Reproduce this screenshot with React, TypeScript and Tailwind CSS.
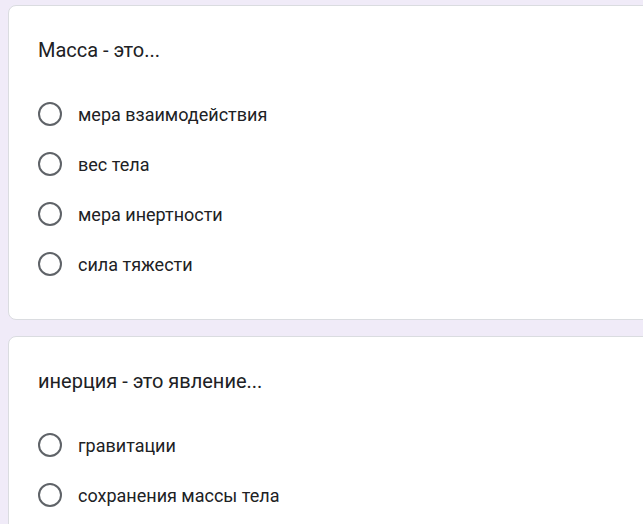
const questions = [
  {
    title: "Масса - это...",
    options: ["мера взаимодействия", "вес тела", "мера инертности", "сила тяжести"],
  },
  {
    title: "инерция - это явление...",
    options: ["гравитации", "сохранения массы тела"],
  },
];

function Radio() {
  return <span className="h-6 w-6 shrink-0 rounded-full border-2 border-[#5f6368]" />;
}

function QuestionCard({ title, options }: { title: string; options: string[] }) {
  return (
    <div className="ml-2 w-[700px] rounded-lg border border-[#dadce0] bg-white pb-[30px] pl-[29px] pt-[32px]">
      <h2 className="text-[20px] leading-6 text-[#202124]">{title}</h2>
      <div className="mt-[27px] flex flex-col">
        {options.map((option) => (
          <label key={option} className="flex h-[50px] items-center gap-4">
            <Radio />
            <span className="text-[18px] text-[#202124]">{option}</span>
          </label>
        ))}
      </div>
    </div>
  );
}

export default function App() {
  return (
    <div
      className="h-[524px] w-[643px] overflow-hidden bg-[#f0ebf8] pt-[5px]"
      style={{ fontFamily: "Roboto, 'Noto Sans', sans-serif" }}
    >
      <div className="flex flex-col gap-4">
        {questions.map((q) => (
          <QuestionCard key={q.title} title={q.title} options={q.options} />
        ))}
      </div>
    </div>
  );
}
